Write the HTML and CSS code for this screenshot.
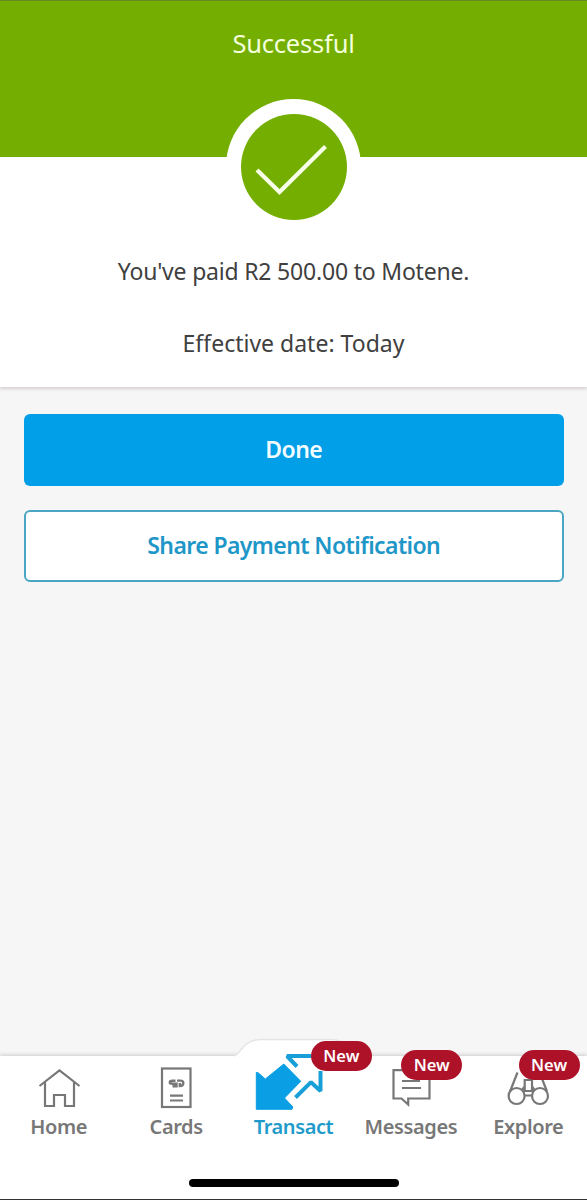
FILE: index.html
```html
<!DOCTYPE html>
<html lang="en">
<head>
  <meta charset="UTF-8">
  <meta name="viewport" content="width=device-width, initial-scale=1.0">
  <title>Payment successful</title>
  <link rel="stylesheet" href="styles.css">
</head>
<body>
  <div class="screen">
    <header class="header">
      <h1>Successful</h1>
    </header>

    <section class="summary">
      <div class="status">
        <svg width="106" height="106" viewBox="0 0 106 106">
          <circle cx="53" cy="53" r="53" fill="#73ae00"/>
          <path d="M16 56 L38.500 78 L84.500 32.500" fill="none" stroke="#f7ffe8" stroke-width="4.200"/>
        </svg>
      </div>
      <p class="paid">You've paid R2 500.00 to Motene.</p>
      <p class="date">Effective date: Today</p>
    </section>

    <main class="actions">
      <button class="btn btn-primary">Done</button>
      <button class="btn btn-outline">Share Payment Notification</button>
    </main>

    <nav class="tabs">
      <!-- raised edge behind the active tab -->
      <svg class="hump" viewBox="0 0 130 22">
        <path class="hump-fill" d="M0 22 V19.500 C11 18 9 2 30 1.500 H100 C121 2 119 18 130 19.500 V22 Z"/>
        <path class="hump-line" d="M3 18 C11 15 11 2 30 1.500 H100 C119 2 119 15 127 18"/>
      </svg>
      <a class="tab">
        <svg class="icon" viewBox="0 0 80 60">
          <path d="M20.500 34 L40.500 18.500 L60.500 34 M26 30 V54 H35 V43 H46 V54 H55 V30"/>
        </svg>
        <span class="tab-label">Home</span>
      </a>
      <a class="tab">
        <svg class="icon" viewBox="0 0 80 60">
          <rect x="26" y="16.500" width="28.500" height="38.500"/>
          <path d="M34 43.700 H47 M34 48.500 H47"/>
          <path class="logo" d="M39.500 28.800 H36.500 Q33.800 28.800 33.800 30.400 Q33.800 31.700 36.500 31.700 H40.500 V34.300 H36.500 M41 28.600 H44.500 Q47.300 28.600 47.300 31 Q47.300 34 43.800 34 V31"/>
        </svg>
        <span class="tab-label">Cards</span>
      </a>
      <a class="tab active">
        <svg class="icon" viewBox="0 0 80 60">
          <path class="solid" d="M3.300 20.500 L4.800 20.500 L12.300 27 L30.800 12 L47.800 29.300 L31.500 46 L39.800 55 L39 57.300 H3.300 Z"/>
          <path class="bold" d="M58 4 H34 L44 14.500 M42.500 45.500 L58 30.200 L67.500 39 V19"/>
        </svg>
        <span class="tab-label">Transact</span>
        <span class="badge">New</span>
      </a>
      <a class="tab">
        <svg class="icon" viewBox="0 0 80 60">
          <path d="M22.500 18.200 H58.500 V46.500 H37.200 V52.500 L30.500 46.500 H22.500 Z M31 29 H49 M31 36 H50"/>
        </svg>
        <span class="tab-label">Messages</span>
        <span class="badge">New</span>
      </a>
      <a class="tab">
        <svg class="icon" viewBox="0 0 80 60">
          <circle cx="28.600" cy="44" r="8"/>
          <circle cx="52" cy="44" r="8"/>
          <path d="M22 39.500 L29.500 20.500 M59 39.500 L54.500 28 L50 20 M36.700 39 V28 H44 V39 Z M36.500 43.500 H44.200 M34 38 L37 34 M46.500 38 L44 34"/>
        </svg>
        <span class="tab-label">Explore</span>
        <span class="badge">New</span>
      </a>
      <div class="home-indicator"></div>
    </nav>
  </div>
</body>
</html>
```
FILE: styles.css
```css
* {
  box-sizing: border-box;
}
body {
  margin: 0;
  font-family: "Noto Sans", sans-serif;
  background-color: #f6f6f6;
  color: #404040;
}
.screen {
  height: 1200px;
  display: flex;
  flex-direction: column;
  overflow: hidden;
  border-bottom: 1px solid #333;
}
.header {
  height: 157px;
  background-color: #73ae00;
  border-top: 1px solid #668b22;
  text-align: center;
}
h1 {
  margin: 25px 0 0;
  font-size: 25.5px;
  line-height: 34px;
  font-weight: 400;
  letter-spacing: -0.2px;
  color: #f4ffdc;
}
.summary {
  position: relative;
  height: 230px;
  background-color: #fff;
  box-shadow: 0 2px 3px rgba(70, 40, 50, 0.18);
  text-align: center;
}
.status {
  width: 135px;
  height: 135px;
  margin: -58px auto 0;
  padding-top: 14.5px;
  border-radius: 50%;
  background-color: #fff;
}
.status svg {
  display: block;
  margin: 0 auto;
}
.summary p {
  margin: 0;
  font-size: 23px;
  line-height: 32px;
}
.summary .paid {
  margin-top: 21px;
  letter-spacing: -0.2px;
}
.summary .date {
  margin-top: 40px;
}
.actions {
  flex: 1;
  display: flex;
  flex-direction: column;
  gap: 24px;
  padding: 26.5px 23.5px 0 24px;
}
.btn {
  height: 72px;
  padding: 0 0 2px;
  border-radius: 6px;
  font-family: inherit;
  font-size: 23px;
  font-weight: 600;
  letter-spacing: -0.6px;
}
.btn-primary {
  border: none;
  background-color: #009fe8;
  color: #f2fcff;
}
.btn-outline {
  border: 2px solid #4aa6c2;
  background-color: #fff;
  color: #1e97c8;
}

/* bottom navigation */
.tabs {
  position: relative;
  height: 143px;
  display: grid;
  grid-template-columns: repeat(5, 1fr);
  background-color: #fff;
  box-shadow: 0 -1px 4px rgba(70, 40, 50, 0.22);
}
.tab {
  position: relative;
  display: flex;
  flex-direction: column;
  align-items: center;
  color: #777;
}
.icon {
  width: 80px;
  height: 60px;
  margin-top: -4px;
  fill: none;
  stroke: #777;
  stroke-width: 2.2;
  overflow: visible;
}
.icon .logo {
  stroke-width: 2.4;
}
.tab-label {
  margin-top: 1px;
  font-size: 20px;
  line-height: 28px;
  font-weight: 600;
  letter-spacing: -0.4px;
}
.active {
  color: #1e9bcb;
}
.icon .solid {
  fill: #0a9fe5;
  stroke: #0a9fe5;
  stroke-width: 1;
  stroke-linejoin: round;
}
.icon .bold {
  stroke: #199fd8;
  stroke-width: 4;
  stroke-linejoin: bevel;
}
.badge {
  position: absolute;
  top: -6px;
  left: 49px;
  width: 61px;
  height: 30px;
  border-radius: 15px;
  background-color: #ad1229;
  color: #fff;
  font-size: 16.5px;
  line-height: 30px;
  font-weight: 600;
  text-align: center;
}
.active .badge {
  top: -15px;
  left: 76px;
}
.hump {
  position: absolute;
  top: -18px;
  left: 231px;
  width: 130px;
  height: 22px;
}
.hump-fill {
  fill: #fff;
}
.hump-line {
  fill: none;
  stroke: #e6e4e5;
  stroke-width: 1.5;
}
.home-indicator {
  position: absolute;
  left: 189px;
  bottom: 12px;
  width: 210px;
  height: 8px;
  border-radius: 4px;
  background-color: #000;
}
```
